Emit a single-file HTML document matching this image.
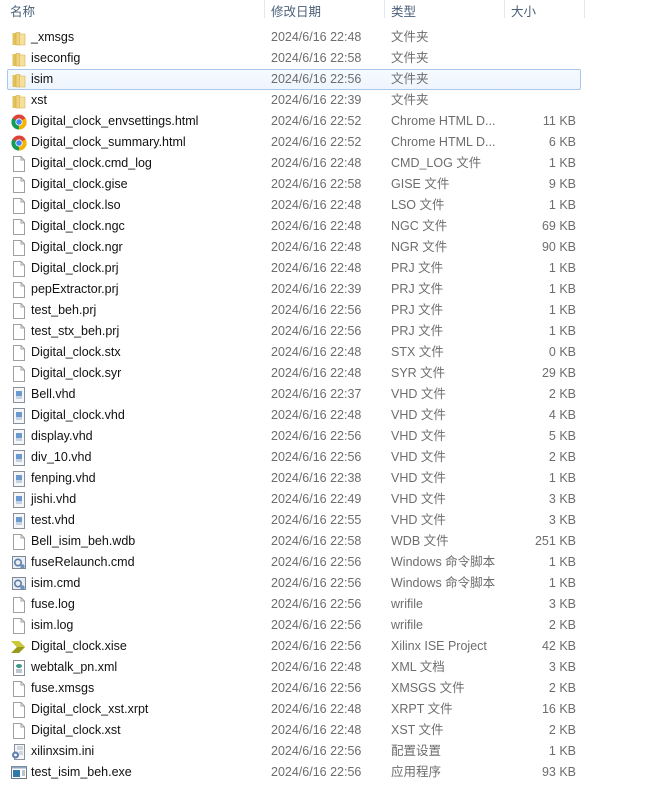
<!DOCTYPE html>
<html><head><meta charset="utf-8">
<style>
html,body{margin:0;padding:0;background:#fff;width:647px;height:794px;overflow:hidden;}
body{font-family:"Liberation Sans","Noto Sans CJK SC",sans-serif;font-size:12.5px;position:relative;}
.hdr{position:absolute;top:0;left:0;width:647px;height:20px;color:#4c607a;}
.hdr span{position:absolute;top:1px;}
.sep{position:absolute;top:0;width:1px;height:18px;background:#e3e8ee;}
.row{position:absolute;left:0;width:647px;height:21px;line-height:21px;}
.row .ic{position:absolute;left:11px;top:3px;width:16px;height:16px;}
.row .n{position:absolute;left:31px;color:#111;white-space:nowrap;}
.row .d{position:absolute;left:271px;color:#6d6d6d;}
.row .t{position:absolute;left:391px;color:#6d6d6d;white-space:nowrap;}
.row .s{position:absolute;right:71px;color:#6d6d6d;}
.sel{position:absolute;left:7px;top:69px;width:572px;height:19px;border:1px solid #a9c8ea;border-radius:2px;background:linear-gradient(#f6faff,#eef5fd);}
</style></head><body>
<svg width="0" height="0" style="position:absolute">
<defs>
<symbol id="folder" viewBox="0 0 16 16"><path d="M1.5 3h4v12h-4z" fill="#e2c25a"/><path d="M5 2.5h4v12.5H5z" fill="#efd27a" stroke="#caa84a" stroke-width=".6"/><path d="M8.5 4h5.5v11H8.5z" fill="#f6e09a" stroke="#d2b258" stroke-width=".6"/></symbol>
<symbol id="file" viewBox="0 0 16 16"><path d="M2.5 0.5h7.5l3.5 3.5v11.5h-11z" fill="#fff" stroke="#a0a0a0"/><path d="M10 0.5v3.5h3.5" fill="none" stroke="#a0a0a0"/></symbol>
<symbol id="vhd" viewBox="0 0 16 16"><path d="M2.5 0.5h11v15h-11z" fill="#f4f6f8" stroke="#8a9099"/><rect x="5" y="4" width="6" height="5" fill="#6a9ad0"/><rect x="5" y="9" width="6" height="3" fill="#c4d2e2"/></symbol>
<symbol id="cmd" viewBox="0 0 16 16"><rect x="1.5" y="1.5" width="13" height="12" fill="#e9eef4" stroke="#7d8894"/><circle cx="7" cy="7.5" r="3.2" fill="none" stroke="#5f7fa6" stroke-width="1.6"/><circle cx="11.5" cy="11.5" r="2.2" fill="#6b8fbf"/></symbol>
<symbol id="chrome" viewBox="0 0 16 16"><circle cx="8" cy="8" r="7.5" fill="#db4437"/><path d="M8 8 L1.5 4.2 A7.5 7.5 0 0 0 8 15.5z" fill="#0f9d58"/><path d="M8 8 L8 15.5 A7.5 7.5 0 0 0 14.5 4.2z" fill="#f4b400"/><circle cx="8" cy="8" r="3.6" fill="#fff"/><circle cx="8" cy="8" r="2.8" fill="#4285f4"/></symbol>
<symbol id="xise" viewBox="0 0 16 16"><path d="M0 2h8l6 6-6 6H0l6-6z" fill="#9a9a1a"/><path d="M0 2h8l6 6H6z" fill="#c9c93a"/></symbol>
<symbol id="xml" viewBox="0 0 16 16"><path d="M2.5 0.5h11v15h-11z" fill="#fff" stroke="#8a9099"/><ellipse cx="8" cy="6" rx="3" ry="2" fill="#3c9a8a"/><path d="M5 10h6M5 12h6" stroke="#7a8aa0"/></symbol>
<symbol id="ini" viewBox="0 0 16 16"><path d="M3.5 0.5h10v15h-10z" fill="#f4f6f8" stroke="#8a9099"/><path d="M6 3h6M6 5h6M8 8h4M8 10h4" stroke="#a8b4c2"/><circle cx="4.5" cy="11" r="3.5" fill="#5f7fae"/><circle cx="4.5" cy="11" r="1.4" fill="#fff"/></symbol>
<symbol id="exe" viewBox="0 0 16 16"><rect x="0.5" y="1.5" width="15" height="12" fill="#fff" stroke="#6d7a88"/><rect x="0.5" y="1.5" width="15" height="2" fill="#8fa6c0"/><rect x="2" y="5" width="7" height="7" fill="#2f7aa8"/><path d="M11 6h3M11 8h3M11 10h3" stroke="#7a8aa0"/></symbol>
</defs></svg>
<div class="hdr"><span style="left:10px">名称</span><span style="left:271px">修改日期</span><span style="left:391px">类型</span><span style="left:511px">大小</span></div>
<div class="sep" style="left:264px"></div><div class="sep" style="left:384px"></div><div class="sep" style="left:504px"></div><div class="sep" style="left:584px"></div>
<div class="sel"></div>

<div class="row" style="top:27px"><svg class="ic" viewBox="0 0 16 16"><use href="#folder" width="16" height="16"/></svg><span class="n">_xmsgs</span><span class="d">2024/6/16 22:48</span><span class="t">文件夹</span></div>
<div class="row" style="top:48px"><svg class="ic" viewBox="0 0 16 16"><use href="#folder" width="16" height="16"/></svg><span class="n">iseconfig</span><span class="d">2024/6/16 22:58</span><span class="t">文件夹</span></div>
<div class="row" style="top:69px"><svg class="ic" viewBox="0 0 16 16"><use href="#folder" width="16" height="16"/></svg><span class="n">isim</span><span class="d">2024/6/16 22:56</span><span class="t">文件夹</span></div>
<div class="row" style="top:90px"><svg class="ic" viewBox="0 0 16 16"><use href="#folder" width="16" height="16"/></svg><span class="n">xst</span><span class="d">2024/6/16 22:39</span><span class="t">文件夹</span></div>
<div class="row" style="top:111px"><svg class="ic" viewBox="0 0 16 16"><use href="#chrome" width="16" height="16"/></svg><span class="n">Digital_clock_envsettings.html</span><span class="d">2024/6/16 22:52</span><span class="t">Chrome HTML D...</span><span class="s">11 KB</span></div>
<div class="row" style="top:132px"><svg class="ic" viewBox="0 0 16 16"><use href="#chrome" width="16" height="16"/></svg><span class="n">Digital_clock_summary.html</span><span class="d">2024/6/16 22:52</span><span class="t">Chrome HTML D...</span><span class="s">6 KB</span></div>
<div class="row" style="top:153px"><svg class="ic" viewBox="0 0 16 16"><use href="#file" width="16" height="16"/></svg><span class="n">Digital_clock.cmd_log</span><span class="d">2024/6/16 22:48</span><span class="t">CMD_LOG 文件</span><span class="s">1 KB</span></div>
<div class="row" style="top:174px"><svg class="ic" viewBox="0 0 16 16"><use href="#file" width="16" height="16"/></svg><span class="n">Digital_clock.gise</span><span class="d">2024/6/16 22:58</span><span class="t">GISE 文件</span><span class="s">9 KB</span></div>
<div class="row" style="top:195px"><svg class="ic" viewBox="0 0 16 16"><use href="#file" width="16" height="16"/></svg><span class="n">Digital_clock.lso</span><span class="d">2024/6/16 22:48</span><span class="t">LSO 文件</span><span class="s">1 KB</span></div>
<div class="row" style="top:216px"><svg class="ic" viewBox="0 0 16 16"><use href="#file" width="16" height="16"/></svg><span class="n">Digital_clock.ngc</span><span class="d">2024/6/16 22:48</span><span class="t">NGC 文件</span><span class="s">69 KB</span></div>
<div class="row" style="top:237px"><svg class="ic" viewBox="0 0 16 16"><use href="#file" width="16" height="16"/></svg><span class="n">Digital_clock.ngr</span><span class="d">2024/6/16 22:48</span><span class="t">NGR 文件</span><span class="s">90 KB</span></div>
<div class="row" style="top:258px"><svg class="ic" viewBox="0 0 16 16"><use href="#file" width="16" height="16"/></svg><span class="n">Digital_clock.prj</span><span class="d">2024/6/16 22:48</span><span class="t">PRJ 文件</span><span class="s">1 KB</span></div>
<div class="row" style="top:279px"><svg class="ic" viewBox="0 0 16 16"><use href="#file" width="16" height="16"/></svg><span class="n">pepExtractor.prj</span><span class="d">2024/6/16 22:39</span><span class="t">PRJ 文件</span><span class="s">1 KB</span></div>
<div class="row" style="top:300px"><svg class="ic" viewBox="0 0 16 16"><use href="#file" width="16" height="16"/></svg><span class="n">test_beh.prj</span><span class="d">2024/6/16 22:56</span><span class="t">PRJ 文件</span><span class="s">1 KB</span></div>
<div class="row" style="top:321px"><svg class="ic" viewBox="0 0 16 16"><use href="#file" width="16" height="16"/></svg><span class="n">test_stx_beh.prj</span><span class="d">2024/6/16 22:56</span><span class="t">PRJ 文件</span><span class="s">1 KB</span></div>
<div class="row" style="top:342px"><svg class="ic" viewBox="0 0 16 16"><use href="#file" width="16" height="16"/></svg><span class="n">Digital_clock.stx</span><span class="d">2024/6/16 22:48</span><span class="t">STX 文件</span><span class="s">0 KB</span></div>
<div class="row" style="top:363px"><svg class="ic" viewBox="0 0 16 16"><use href="#file" width="16" height="16"/></svg><span class="n">Digital_clock.syr</span><span class="d">2024/6/16 22:48</span><span class="t">SYR 文件</span><span class="s">29 KB</span></div>
<div class="row" style="top:384px"><svg class="ic" viewBox="0 0 16 16"><use href="#vhd" width="16" height="16"/></svg><span class="n">Bell.vhd</span><span class="d">2024/6/16 22:37</span><span class="t">VHD 文件</span><span class="s">2 KB</span></div>
<div class="row" style="top:405px"><svg class="ic" viewBox="0 0 16 16"><use href="#vhd" width="16" height="16"/></svg><span class="n">Digital_clock.vhd</span><span class="d">2024/6/16 22:48</span><span class="t">VHD 文件</span><span class="s">4 KB</span></div>
<div class="row" style="top:426px"><svg class="ic" viewBox="0 0 16 16"><use href="#vhd" width="16" height="16"/></svg><span class="n">display.vhd</span><span class="d">2024/6/16 22:56</span><span class="t">VHD 文件</span><span class="s">5 KB</span></div>
<div class="row" style="top:447px"><svg class="ic" viewBox="0 0 16 16"><use href="#vhd" width="16" height="16"/></svg><span class="n">div_10.vhd</span><span class="d">2024/6/16 22:56</span><span class="t">VHD 文件</span><span class="s">2 KB</span></div>
<div class="row" style="top:468px"><svg class="ic" viewBox="0 0 16 16"><use href="#vhd" width="16" height="16"/></svg><span class="n">fenping.vhd</span><span class="d">2024/6/16 22:38</span><span class="t">VHD 文件</span><span class="s">1 KB</span></div>
<div class="row" style="top:489px"><svg class="ic" viewBox="0 0 16 16"><use href="#vhd" width="16" height="16"/></svg><span class="n">jishi.vhd</span><span class="d">2024/6/16 22:49</span><span class="t">VHD 文件</span><span class="s">3 KB</span></div>
<div class="row" style="top:510px"><svg class="ic" viewBox="0 0 16 16"><use href="#vhd" width="16" height="16"/></svg><span class="n">test.vhd</span><span class="d">2024/6/16 22:55</span><span class="t">VHD 文件</span><span class="s">3 KB</span></div>
<div class="row" style="top:531px"><svg class="ic" viewBox="0 0 16 16"><use href="#file" width="16" height="16"/></svg><span class="n">Bell_isim_beh.wdb</span><span class="d">2024/6/16 22:58</span><span class="t">WDB 文件</span><span class="s">251 KB</span></div>
<div class="row" style="top:552px"><svg class="ic" viewBox="0 0 16 16"><use href="#cmd" width="16" height="16"/></svg><span class="n">fuseRelaunch.cmd</span><span class="d">2024/6/16 22:56</span><span class="t">Windows 命令脚本</span><span class="s">1 KB</span></div>
<div class="row" style="top:573px"><svg class="ic" viewBox="0 0 16 16"><use href="#cmd" width="16" height="16"/></svg><span class="n">isim.cmd</span><span class="d">2024/6/16 22:56</span><span class="t">Windows 命令脚本</span><span class="s">1 KB</span></div>
<div class="row" style="top:594px"><svg class="ic" viewBox="0 0 16 16"><use href="#file" width="16" height="16"/></svg><span class="n">fuse.log</span><span class="d">2024/6/16 22:56</span><span class="t">wrifile</span><span class="s">3 KB</span></div>
<div class="row" style="top:615px"><svg class="ic" viewBox="0 0 16 16"><use href="#file" width="16" height="16"/></svg><span class="n">isim.log</span><span class="d">2024/6/16 22:56</span><span class="t">wrifile</span><span class="s">2 KB</span></div>
<div class="row" style="top:636px"><svg class="ic" viewBox="0 0 16 16"><use href="#xise" width="16" height="16"/></svg><span class="n">Digital_clock.xise</span><span class="d">2024/6/16 22:56</span><span class="t">Xilinx ISE Project</span><span class="s">42 KB</span></div>
<div class="row" style="top:657px"><svg class="ic" viewBox="0 0 16 16"><use href="#xml" width="16" height="16"/></svg><span class="n">webtalk_pn.xml</span><span class="d">2024/6/16 22:48</span><span class="t">XML 文档</span><span class="s">3 KB</span></div>
<div class="row" style="top:678px"><svg class="ic" viewBox="0 0 16 16"><use href="#file" width="16" height="16"/></svg><span class="n">fuse.xmsgs</span><span class="d">2024/6/16 22:56</span><span class="t">XMSGS 文件</span><span class="s">2 KB</span></div>
<div class="row" style="top:699px"><svg class="ic" viewBox="0 0 16 16"><use href="#file" width="16" height="16"/></svg><span class="n">Digital_clock_xst.xrpt</span><span class="d">2024/6/16 22:48</span><span class="t">XRPT 文件</span><span class="s">16 KB</span></div>
<div class="row" style="top:720px"><svg class="ic" viewBox="0 0 16 16"><use href="#file" width="16" height="16"/></svg><span class="n">Digital_clock.xst</span><span class="d">2024/6/16 22:48</span><span class="t">XST 文件</span><span class="s">2 KB</span></div>
<div class="row" style="top:741px"><svg class="ic" viewBox="0 0 16 16"><use href="#ini" width="16" height="16"/></svg><span class="n">xilinxsim.ini</span><span class="d">2024/6/16 22:56</span><span class="t">配置设置</span><span class="s">1 KB</span></div>
<div class="row" style="top:762px"><svg class="ic" viewBox="0 0 16 16"><use href="#exe" width="16" height="16"/></svg><span class="n">test_isim_beh.exe</span><span class="d">2024/6/16 22:56</span><span class="t">应用程序</span><span class="s">93 KB</span></div>
</body></html>
